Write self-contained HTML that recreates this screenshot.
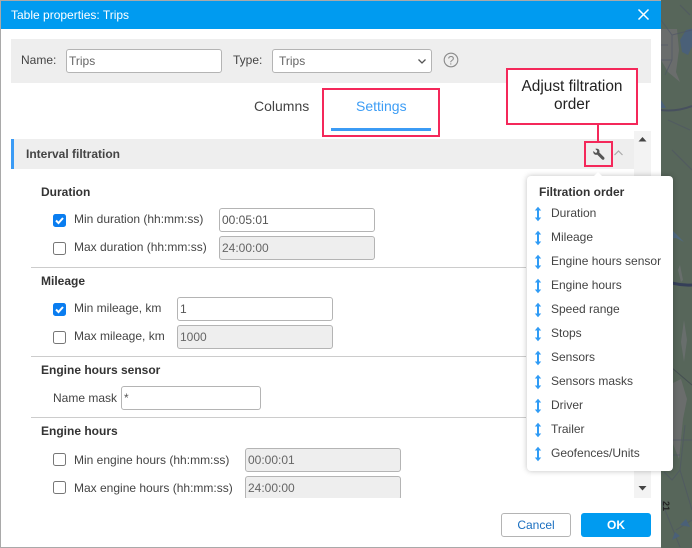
<!DOCTYPE html>
<html><head><meta charset="utf-8">
<style>
*{box-sizing:border-box}
html,body{margin:0;padding:0;width:692px;height:548px;overflow:hidden;background:#58665a;font-family:"Liberation Sans",sans-serif;font-size:12px;color:#444}
.a{position:absolute}
.t{position:absolute;white-space:nowrap;line-height:14px}
.b{color:#333;font-weight:bold;font-size:12px}
.inp{position:absolute;height:24px;border:1px solid #b4b4b4;border-radius:3px;background:#fff;padding-left:2px;line-height:22px;font-size:12px;color:#555}
.dis{background:#eee;color:#666}
.cb{position:absolute;width:13px;height:13px;border:1px solid #777;border-radius:2.5px;background:#fff}
.cb.on{background:#0a7df0;border-color:#0a7df0}
.cb svg{position:absolute;left:0;top:0}
.hr{position:absolute;left:31px;width:495px;height:1px;background:#ccc}
.it{position:absolute;left:551px;font-size:12px;color:#444;line-height:14px;white-space:nowrap}
.ar{position:absolute;left:533px}
</style></head><body>
<svg class="a" style="left:661px;top:0" width="31" height="548" viewBox="661 0 31 548">
<rect x="661" y="0" width="31" height="548" fill="#57665a"/>
<path d="M661 29H677L679 50L676 72L680 82L668 72L661 60Z" fill="#6a6d6c"/>
<path d="M686 30L694 28V42L688 55L682 52L680 40Z" fill="#4a6078"/>
<path d="M661 100L666 108L661 108Z" fill="#4a6078"/>
<path d="M661 217L672 230L684 242L676 238L661 240Z" fill="#506a80"/>
<path d="M661 110Q676 112 692 106" stroke="#47505e" stroke-width="2" fill="none"/>
<path d="M661 279Q676 286 692 285" stroke="#353f58" stroke-width="3" fill="none"/>
<path d="M680 265l3 15l-2 2l-3 -12zM684 320l3 20l-3 22l-3-20z" fill="#686e6c"/>
<path d="M661 300l8 20l-4 40l-4 0zM661 385h8l12 -6l6 20l-4 20l-4 40l-8 -20l-10 -20z" fill="#6a6d6c"/>
<path d="M661 20L672 35V60L665 75M680 5L690 15M672 35L692 30M661 60H672M661 45H668M672 150L692 170M668 120L690 130M661 440H692M661 455H680M685 425L680 470L692 510M680 470L672 480L664 472M661 500L680 547M676 530L692 520" stroke="#4d5466" fill="none" stroke-width="1" opacity=".6"/>
<path d="M672 540l3-8l5 4zM680 525l6-6l4 8z" fill="#4a6078"/>
<path d="M665 362L692 385" stroke="#3d454e" stroke-width="1" fill="none" opacity=".7"/>
<text x="666" y="504" transform="rotate(90 666 501)" font-family="Liberation Sans" font-size="9" fill="#222" font-weight="bold">21</text>
</svg>
<div class="a" style="left:0;top:0;width:661px;height:548px;background:#fff;border-left:1px solid #a9a9a9;border-top:1px solid #a9a9a9;border-bottom:1px solid #a9a9a9"></div>
<div class="a" style="left:1px;top:1px;width:660px;height:28px;background:#009bf0"></div>
<div class="t" style="left:11px;top:8px;color:#fff;font-size:12px">Table properties: Trips</div>
<svg class="a" style="left:637px;top:8px" width="13" height="13"><path d="M1.500 1.500L11.500 11.500M11.500 1.500L1.500 11.500" stroke="#fff" stroke-width="1.500" fill="none"/></svg>

<div class="a" style="left:11px;top:39px;width:640px;height:44px;background:#eee"></div>
<div class="t" style="left:21px;top:53px;color:#444">Name:</div>
<div class="inp" style="left:66px;top:49px;width:156px;color:#666">Trips</div>
<div class="t" style="left:233px;top:53px;color:#444">Type:</div>
<div class="inp" style="left:272px;top:49px;width:160px;color:#666;padding-left:6px">Trips</div>
<svg class="a" style="left:417px;top:58px" width="10" height="7"><path d="M1.500 1.500L5 5L8.500 1.500" stroke="#555" stroke-width="1.300" fill="none"/></svg>
<svg class="a" style="left:443px;top:52px" width="16" height="16"><circle cx="8" cy="8" r="6.800" stroke="#8a8a8a" stroke-width="1.100" fill="none"/><text x="8" y="12.500" text-anchor="middle" font-family="Liberation Sans" font-size="12" fill="#8a8a8a">?</text></svg>

<div class="t" style="left:254px;top:99px;font-size:14px;color:#444">Columns</div>
<div class="t" style="left:356px;top:99px;font-size:14px;color:#3d9df5">Settings</div>
<div class="a" style="left:331px;top:128px;width:100px;height:3px;background:#3b9bf5"></div>
<div class="a" style="left:322px;top:88px;width:118px;height:49px;border:2px solid #f4285a"></div>

<div class="a" style="left:11px;top:139px;width:623px;height:30px;background:#eee;border-left:3px solid #3b9bf5"></div>
<div class="t b" style="left:26px;top:147px;color:#444">Interval filtration</div>
<div class="a" style="left:634px;top:131px;width:17px;height:367px;background:#f3f3f3"></div>
<svg class="a" style="left:638px;top:136px" width="9" height="7"><path d="M0.500 5.500L4.500 1L8.500 5.500Z" fill="#444"/></svg>
<svg class="a" style="left:638px;top:485px" width="9" height="7"><path d="M0.500 1L4.500 5.500L8.500 1Z" fill="#444"/></svg>
<svg class="a" style="left:613px;top:149px" width="11" height="8"><path d="M1.500 6L5.500 2L9.500 6" stroke="#aaa" stroke-width="1.200" fill="none"/></svg>
<svg class="a" style="left:592px;top:148px" width="13" height="13" viewBox="0 0 14 14"><path d="M1.500 3.200L3.700 5.300L5.300 4.800L5.600 3L3.500 1C5 .3 7 .8 7.700 2.200C8.200 3.200 8.100 4.200 7.900 4.800L13 9.900C13.600 10.500 13.600 11.500 13 12.200C12.300 12.900 11.300 12.900 10.700 12.300L5.600 7.200C4.800 7.500 3.600 7.400 2.700 6.800C1.500 6 1.100 4.500 1.500 3.200Z" fill="#555"/></svg>
<div class="a" style="left:584px;top:141px;width:29px;height:26px;border:2px solid #f4285a"></div>
<div class="a" style="left:597px;top:124px;width:2px;height:18px;background:#f4285a"></div>
<div class="a" style="left:506px;top:68px;width:132px;height:57px;background:#fff;border:2px solid #f4285a"></div>
<div class="a" style="left:506px;top:78px;width:132px;text-align:center;font-size:15.400px;line-height:18px;color:#222">Adjust filtration<br>order</div>

<div class="t b" style="left:41px;top:185px">Duration</div>
<div class="cb on" style="left:53px;top:214px"><svg width="11" height="11"><path d="M2 5.500L4.500 8L9 3" stroke="#fff" stroke-width="2" fill="none"/></svg></div>
<div class="t" style="left:74px;top:212px">Min duration (hh:mm:ss)</div>
<div class="inp" style="left:219px;top:208px;width:156px">00:05:01</div>
<div class="cb" style="left:53px;top:242px"></div>
<div class="t" style="left:74px;top:240px">Max duration (hh:mm:ss)</div>
<div class="inp dis" style="left:219px;top:236px;width:156px">24:00:00</div>
<div class="hr" style="top:267px"></div>

<div class="t b" style="left:41px;top:274px">Mileage</div>
<div class="cb on" style="left:53px;top:303px"><svg width="11" height="11"><path d="M2 5.500L4.500 8L9 3" stroke="#fff" stroke-width="2" fill="none"/></svg></div>
<div class="t" style="left:74px;top:301px">Min mileage, km</div>
<div class="inp" style="left:177px;top:297px;width:156px">1</div>
<div class="cb" style="left:53px;top:331px"></div>
<div class="t" style="left:74px;top:329px">Max mileage, km</div>
<div class="inp dis" style="left:177px;top:325px;width:156px">1000</div>
<div class="hr" style="top:356px"></div>

<div class="t b" style="left:41px;top:363px">Engine hours sensor</div>
<div class="t" style="left:53px;top:391px">Name mask</div>
<div class="inp" style="left:121px;top:386px;width:140px">*</div>
<div class="hr" style="top:417px"></div>

<div class="t b" style="left:41px;top:424px">Engine hours</div>
<div class="cb" style="left:53px;top:453px"></div>
<div class="t" style="left:74px;top:453px">Min engine hours (hh:mm:ss)</div>
<div class="inp dis" style="left:245px;top:448px;width:156px">00:00:01</div>
<div class="cb" style="left:53px;top:481px"></div>
<div class="t" style="left:74px;top:481px">Max engine hours (hh:mm:ss)</div>
<div class="a" style="left:245px;top:476px;width:156px;height:22px;overflow:hidden"><div class="inp dis" style="left:0;top:0;width:156px">24:00:00</div></div>

<div class="a" style="left:501px;top:513px;width:70px;height:24px;border:1px solid #b4b4b4;border-radius:3px;background:#fff;color:#1a6fc0;text-align:center;line-height:22px">Cancel</div>
<div class="a" style="left:581px;top:513px;width:70px;height:24px;border-radius:3px;background:#009bf0;color:#fff;text-align:center;line-height:24px;font-weight:bold">OK</div>

<div class="a" style="left:527px;top:176px;width:146px;height:295px;background:#fff;border-radius:4px;box-shadow:0 0 6px rgba(0,0,0,.25)"></div>
<div class="a" style="left:593px;top:172px;width:0;height:0;border-left:5px solid transparent;border-right:5px solid transparent;border-bottom:5px solid #fff"></div>
<div class="t b" style="left:539px;top:185px">Filtration order</div>
<svg width="0" height="0" style="position:absolute"><defs><symbol id="ud" viewBox="0 0 10 16"><path d="M5 2V14" stroke="#2f9bf5" stroke-width="2" fill="none"/><path d="M1.800 4.500L5 .8L8.200 4.500ZM1.800 11.500L5 15.200L8.200 11.500Z" fill="#2f9bf5"/></symbol></defs></svg>
<svg class="ar" style="top:206px" width="10" height="16"><use href="#ud"/></svg><div class="it" style="top:206px">Duration</div>
<svg class="ar" style="top:230px" width="10" height="16"><use href="#ud"/></svg><div class="it" style="top:230px">Mileage</div>
<svg class="ar" style="top:254px" width="10" height="16"><use href="#ud"/></svg><div class="it" style="top:254px">Engine hours sensor</div>
<svg class="ar" style="top:278px" width="10" height="16"><use href="#ud"/></svg><div class="it" style="top:278px">Engine hours</div>
<svg class="ar" style="top:302px" width="10" height="16"><use href="#ud"/></svg><div class="it" style="top:302px">Speed range</div>
<svg class="ar" style="top:326px" width="10" height="16"><use href="#ud"/></svg><div class="it" style="top:326px">Stops</div>
<svg class="ar" style="top:350px" width="10" height="16"><use href="#ud"/></svg><div class="it" style="top:350px">Sensors</div>
<svg class="ar" style="top:374px" width="10" height="16"><use href="#ud"/></svg><div class="it" style="top:374px">Sensors masks</div>
<svg class="ar" style="top:398px" width="10" height="16"><use href="#ud"/></svg><div class="it" style="top:398px">Driver</div>
<svg class="ar" style="top:422px" width="10" height="16"><use href="#ud"/></svg><div class="it" style="top:422px">Trailer</div>
<svg class="ar" style="top:446px" width="10" height="16"><use href="#ud"/></svg><div class="it" style="top:446px">Geofences/Units</div>
</body></html>
